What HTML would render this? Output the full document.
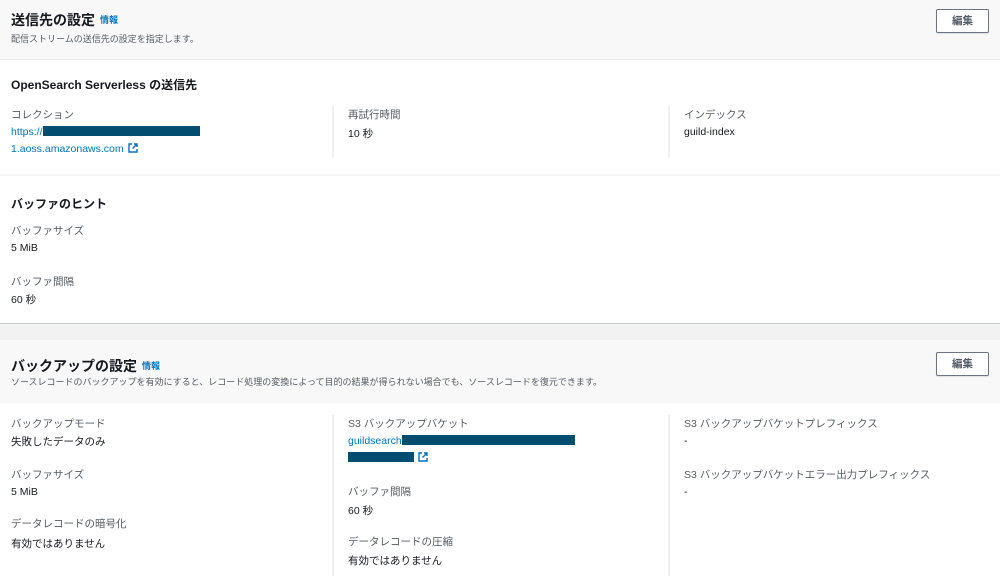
<!DOCTYPE html>
<html><head><meta charset="utf-8"><style>
*{margin:0;padding:0;box-sizing:border-box}
body{width:1000px;height:576px;overflow:hidden;background:#fff;font-family:"Liberation Sans","Noto Sans CJK JP",sans-serif;color:#16191f;position:relative}
.a{position:absolute;white-space:nowrap}
.t{font-size:14px;font-weight:bold}
.info{font-size:9px;color:#0073bb;font-weight:bold;margin-left:5px;vertical-align:2px}
.sub{font-size:9px;color:#545b64}
.h{font-size:12px;font-weight:bold}
.l{font-size:10.5px;color:#545b64}
.v{font-size:10.5px;color:#16191f}
.lk{font-size:10.5px;color:#0073bb}
.btn{position:absolute;width:53px;height:24px;border:1px solid #6b7480;border-radius:2px;background:#fff;font-size:10.5px;font-weight:bold;color:#545b64;text-align:center;line-height:22px;box-shadow:0 1px 1px rgba(0,0,0,.1)}
.div{position:absolute;width:2px;background:#f0f0f0}
.red{display:inline-block;background:#034e70;height:10px;vertical-align:-1px}
.ext{display:inline-block;width:10px;height:10px;vertical-align:-1px;margin-left:4px}
</style></head><body>
<div class="a" style="left:0;top:0;width:1000px;height:60px;background:#f8f8f8;border-bottom:1px solid #ececec"></div>
<div class="a t" style="left:11px;top:10px">送信先の設定<span class="info">情報</span></div>
<div class="a sub" style="left:11px;top:32px">配信ストリームの送信先の設定を指定します。</div>
<div class="btn" style="left:936px;top:9px">編集</div>

<div class="a h" style="left:11px;top:76px">OpenSearch Serverless の送信先</div>
<div class="a l" style="left:11px;top:107px">コレクション</div>
<div class="a lk" style="left:11px;top:126px">https://<span class="red" style="width:157px"></span></div>
<div class="a lk" style="left:11px;top:143px">1.aoss.amazonaws.com<svg class="ext" viewBox="0 0 10 10"><path d="M4 1H1v8h8V6M6 1h3v3M9 1L4.5 5.5" fill="none" stroke="#0073bb" stroke-width="1.4"/></svg></div>
<div class="div" style="left:332px;top:106px;height:51px"></div>
<div class="div" style="left:668px;top:106px;height:51px"></div>
<div class="a l" style="left:348px;top:107px">再試行時間</div>
<div class="a v" style="left:348px;top:126px">10 秒</div>
<div class="a l" style="left:684px;top:107px">インデックス</div>
<div class="a v" style="left:684px;top:126px">guild-index</div>
<div class="a" style="left:0;top:174px;width:1000px;height:2px;background:#f6f6f6"></div>

<div class="a h" style="left:11px;top:195px">バッファのヒント</div>
<div class="a l" style="left:11px;top:223px">バッファサイズ</div>
<div class="a v" style="left:11px;top:242px">5 MiB</div>
<div class="a l" style="left:11px;top:274px">バッファ間隔</div>
<div class="a v" style="left:11px;top:292px">60 秒</div>

<div class="a" style="left:0;top:323px;width:1000px;height:1px;background:#c4c9cb"></div>
<div class="a" style="left:0;top:324px;width:1000px;height:16px;background:#f2f2f2"></div>
<div class="a" style="left:0;top:340px;width:1000px;height:63px;background:#f8f8f8"></div>
<div class="a t" style="left:11px;top:356px">バックアップの設定<span class="info">情報</span></div>
<div class="a sub" style="left:11px;top:375px">ソースレコードのバックアップを有効にすると、レコード処理の変換によって目的の結果が得られない場合でも、ソースレコードを復元できます。</div>
<div class="btn" style="left:936px;top:352px">編集</div>

<div class="div" style="left:332px;top:415px;height:161px"></div>
<div class="div" style="left:668px;top:415px;height:161px"></div>
<div class="a l" style="left:11px;top:416px">バックアップモード</div>
<div class="a v" style="left:11px;top:434px">失敗したデータのみ</div>
<div class="a l" style="left:11px;top:467px">バッファサイズ</div>
<div class="a v" style="left:11px;top:486px">5 MiB</div>
<div class="a l" style="left:11px;top:516px">データレコードの暗号化</div>
<div class="a v" style="left:11px;top:536px">有効ではありません</div>

<div class="a l" style="left:348px;top:416px">S3 バックアップバケット</div>
<div class="a lk" style="left:348px;top:435px">guildsearch<span class="red" style="width:173px"></span></div>
<div class="a lk" style="left:348px;top:452px"><span class="red" style="width:66px"></span><svg class="ext" viewBox="0 0 10 10"><path d="M4 1H1v8h8V6M6 1h3v3M9 1L4.5 5.5" fill="none" stroke="#0073bb" stroke-width="1.4"/></svg></div>
<div class="a l" style="left:348px;top:484px">バッファ間隔</div>
<div class="a v" style="left:348px;top:503px">60 秒</div>
<div class="a l" style="left:348px;top:534px">データレコードの圧縮</div>
<div class="a v" style="left:348px;top:553px">有効ではありません</div>

<div class="a l" style="left:684px;top:416px">S3 バックアップバケットプレフィックス</div>
<div class="a v" style="left:684px;top:435px">-</div>
<div class="a l" style="left:684px;top:467px">S3 バックアップバケットエラー出力プレフィックス</div>
<div class="a v" style="left:684px;top:486px">-</div>
</body></html>
